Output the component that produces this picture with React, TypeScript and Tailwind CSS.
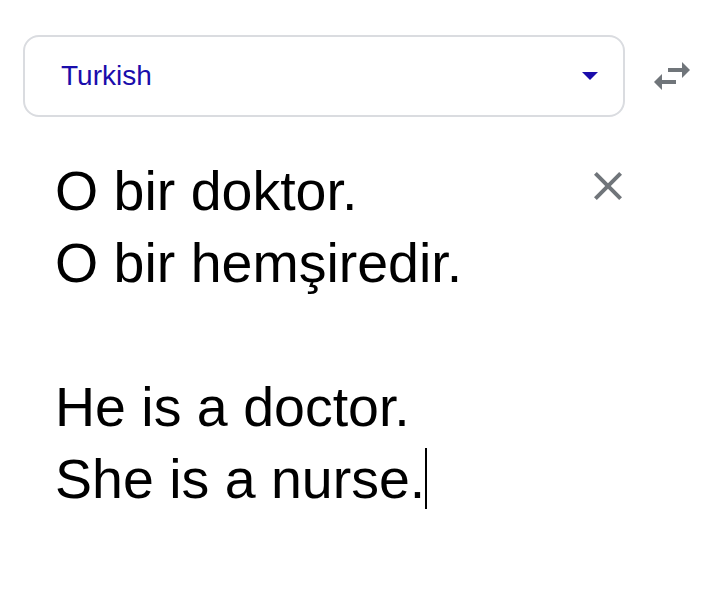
const SwapIcon = () => (
  <svg width="48" height="48" viewBox="0 0 24 24" fill="#70757a">
    <path d="M6.99 11L3 15l3.99 4v-3H14v-2H6.99v-3zM21 9l-4-4v3H10v2h7v3l4-4z" />
  </svg>
);

const CloseIcon = () => (
  <svg width="48" height="48" viewBox="0 0 24 24" fill="#70757a">
    <path d="M19 6.41L17.59 5 12 10.59 6.41 5 5 6.41 10.59 12 5 17.59 6.41 19 12 13.41 17.59 19 19 17.59 13.41 12z" />
  </svg>
);

const App = () => {
  const source = ['O bir doktor.', 'O bir hemşiredir.', '', 'He is a doctor.'];

  return (
    <div className="w-[718px] h-[602px] bg-white font-['Liberation_Sans',Arial,sans-serif]">
      {/* language picker + swap */}
      <div className="flex items-center pt-[35px] pl-[23px]">
        <div className="w-[602px] h-[82px] border-2 border-[#dadce0] rounded-[16px] flex items-center justify-between pl-[36px] pr-[25px]">
          <span className="text-[28px] text-[#1a0dab]">Turkish</span>
          <svg width="16" height="8" viewBox="0 0 16 8">
            <polygon points="0,0 16,0 8,8" fill="#1a0dab" />
          </svg>
        </div>
        <button className="ml-[23px]">
          <SwapIcon />
        </button>
      </div>

      {/* source text */}
      <div className="flex pt-[38px] pl-[55px] pr-[86px]">
        <div className="flex-1 text-[55.5px] leading-[72px] text-black">
          {source.map((line, idx) => (
            <div key={idx} className="h-[72px]">
              {line}
            </div>
          ))}
          <div className="h-[72px]">
            She is a nurse.
            <span className="inline-block w-[2px] h-[61px] bg-black align-[-11px]" />
          </div>
        </div>
        <button className="mt-[7px] h-fit">
          <CloseIcon />
        </button>
      </div>
    </div>
  );
};

export default App;
